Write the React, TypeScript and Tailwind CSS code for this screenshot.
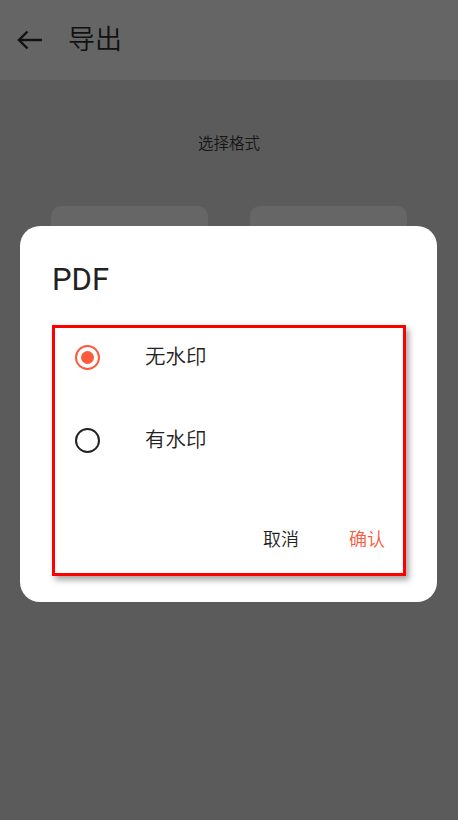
import React, { useState } from 'react';

// Export page with watermark choice dialog
const options = [
  { id: 'none', label: '无水印' },
  { id: 'mark', label: '有水印' },
];

const Radio: React.FC<{ checked: boolean }> = ({ checked }) => (
  <span
    className={`flex h-[25px] w-[25px] items-center justify-center rounded-full border-[2.5px] ${
      checked ? 'border-[#fb5a3e]' : 'border-[#222222]'
    }`}
  >
    {checked && <span className="h-[13px] w-[13px] rounded-full bg-[#fb5a3e]" />}
  </span>
);

const App: React.FC = () => {
  const [selected, setSelected] = useState<string>('none');

  return (
    <div
      className="relative h-[820px] w-[458px] overflow-hidden bg-[#5b5b5b]"
      style={{ fontFamily: 'Roboto, "Noto Sans CJK SC", sans-serif' }}
    >
      {/* Top bar */}
      <div className="flex h-[80px] items-center bg-[#656565]">
        <svg className="ml-[17px] h-[20px] w-[26px]" viewBox="0 0 26 20" fill="none">
          <path d="M25 10H2.5" stroke="#111" strokeWidth="2.4" />
          <path d="M10.5 1.5 2 10l8.5 8.5" stroke="#111" strokeWidth="2.4" />
        </svg>
        <h1 className="ml-[25px] text-[27px] font-[350] leading-none text-[#111]">导出</h1>
      </div>

      {/* Page content behind the dialog */}
      <p className="mt-[55px] text-center text-[15.5px] font-[350] leading-[18px] text-[#161616]">选择格式</p>
      <div className="mt-[53px] flex justify-between px-[51px]">
        <div className="h-[150px] w-[157px] rounded-[10px] bg-[#666666]" />
        <div className="h-[150px] w-[157px] rounded-[10px] bg-[#666666]" />
      </div>

      {/* Dialog */}
      <div className="absolute left-[20px] top-[226px] h-[376px] w-[417px] rounded-[20px] bg-white px-[32px] pt-[36px]">
        <h2 className="text-[31px] leading-[36px] text-[#222]">PDF</h2>
        <div className="mt-[27px] h-[251px] w-[354px] border-[3px] border-[#ff0000] shadow-[3px_4px_6px_rgba(0,0,0,0.35)]">
          <div className="pt-[17px]">
            {options.map((opt) => (
              <div
                key={opt.id}
                onClick={() => setSelected(opt.id)}
                className="flex h-[83px] cursor-pointer items-start pl-[20px]"
              >
                <Radio checked={selected === opt.id} />
                <span className="ml-[45px] mt-[-2px] text-[20.5px] font-[350] leading-[28px] text-[#222]">
                  {opt.label}
                </span>
              </div>
            ))}
          </div>
          <div className="mt-[17px] flex justify-end gap-[50px] pr-[18px]">
            <button className="text-[18px] font-[350] leading-[24px] text-[#222]">取消</button>
            <button className="text-[18px] font-[350] leading-[24px] text-[#fb5a3e]">确认</button>
          </div>
        </div>
      </div>
    </div>
  );
};

export default App;
